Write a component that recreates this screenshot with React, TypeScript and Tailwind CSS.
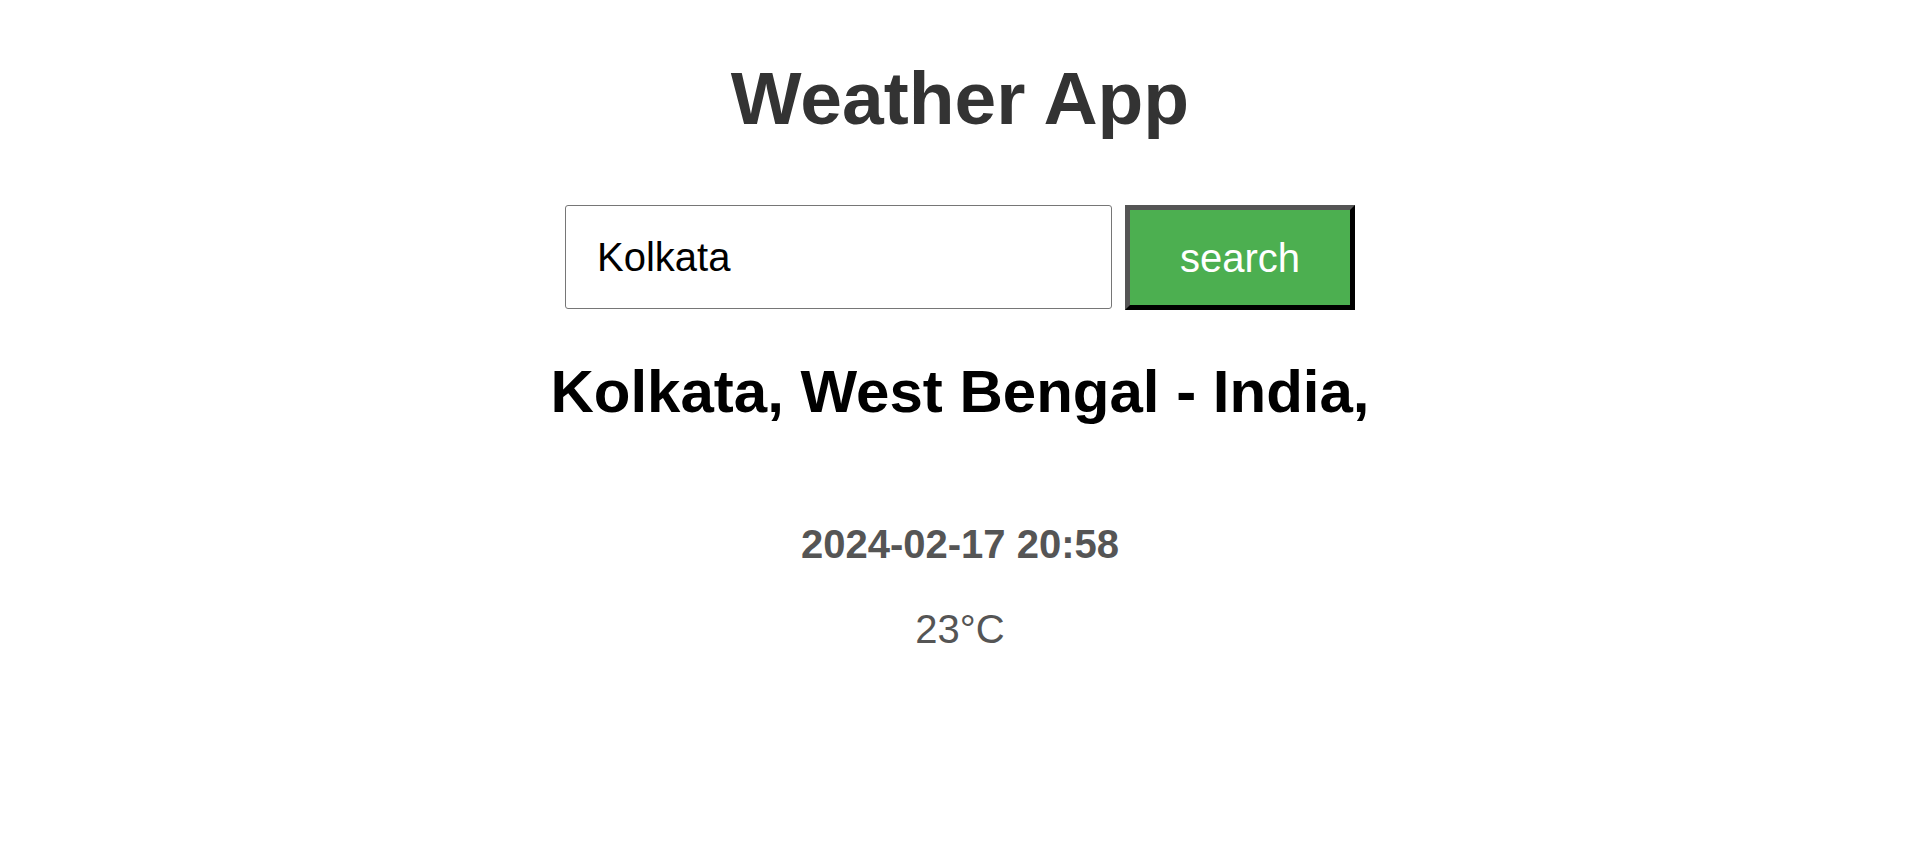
import { useState } from 'react';

export default function App() {
  const [city, setCity] = useState('Kolkata');

  return (
    <div className="min-h-screen bg-white font-['Liberation_Sans',Arial,sans-serif]">
      <div className="flex flex-col items-center">
        {/* Title */}
        <h1 className="mt-[61px] text-[75px] leading-[75px] font-bold text-[#333]">Weather App</h1>

        {/* Search */}
        <div className="mt-[69px] flex items-start gap-[13px]">
          <input
            value={city}
            onChange={(e) => setCity(e.target.value)}
            className="w-[547px] h-[104px] border border-[#767676] rounded-[3px] pl-[31px] text-[40px] text-black outline-none"
          />
          <button className="w-[230px] h-[105px] border-[5px] border-t-[#555] border-l-[#555] border-r-black border-b-black bg-[#4CAF50] text-white text-[40px]">
            search
          </button>
        </div>

        {/* Location */}
        <h2 className="mt-[52px] text-[60px] leading-[60px] font-bold text-black">Kolkata, West Bengal - India,</h2>

        {/* Details */}
        <p className="mt-[102px] text-[40px] leading-[40px] font-bold text-[#555]">2024-02-17 20:58</p>
        <p className="mt-[45px] text-[40px] leading-[40px] text-[#555]">23°C</p>
      </div>
    </div>
  );
}
